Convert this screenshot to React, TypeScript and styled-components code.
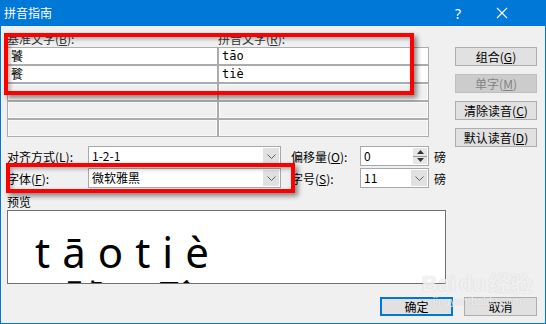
import * as React from 'react';
import styled, { createGlobalStyle } from 'styled-components';

const GlobalStyle = createGlobalStyle`
  html, body {
    margin: 0;
    padding: 0;
    overflow: hidden;
    background: #f0f0f0;
  }
  body {
    font-family: "Noto Sans CJK SC", "Noto Sans", sans-serif;
    font-size: 12px;
    color: #000;
  }
`;

const rows = [
  { base: '饕', ruby: 'tāo' },
  { base: '餮', ruby: 'tiè' },
  { base: '', ruby: '' },
  { base: '', ruby: '' },
  { base: '', ruby: '' },
];

const Chevron = () => (
  <svg width="9" height="5" viewBox="0 0 9 5">
    <polyline points="0.5,0.5 4.5,4.5 8.5,0.5" fill="none" stroke="#606060" strokeWidth="1" />
  </svg>
);

const ComboBox = ({ value }: { value: string }) => (
  <Combo>
    <ComboText>{value}</ComboText>
    <DropButton>
      <Chevron />
    </DropButton>
  </Combo>
);

const SpinBox = ({ value }: { value: string }) => (
  <Combo>
    <ComboText>{value}</ComboText>
    <Spinner>
      <svg width="7" height="4" viewBox="0 0 7 4">
        <polygon points="0,4 3.5,0 7,4" fill="#333" />
      </svg>
      <SpinDivider />
      <svg width="7" height="4" viewBox="0 0 7 4">
        <polygon points="0,0 3.5,4 7,0" fill="#333" />
      </svg>
    </Spinner>
  </Combo>
);

const App = () => {
  return (
    <>
      <GlobalStyle />
      <Window>
        <TitleBar>
          <Title>拼音指南</Title>
          <TitleButtons>
            <HelpGlyph>?</HelpGlyph>
            <CloseGlyph>
              <svg width="12" height="12" viewBox="0 0 12 12">
                <path d="M1 1 L11 11 M11 1 L1 11" stroke="#fff" strokeWidth="1.1" />
              </svg>
            </CloseGlyph>
          </TitleButtons>
        </TitleBar>

        <Body>
          <Top>
            <Main>
              <HeaderRow>
                <span>基准文字(<u>B</u>):</span>
                <span>拼音文字(<u>R</u>):</span>
              </HeaderRow>
              <Table>
                {rows.map((r, i) => (
                  <React.Fragment key={i}>
                    <Cell $filled={!!r.base}>{r.base}</Cell>
                    <Cell $filled={!!r.ruby} $latin>{r.ruby}</Cell>
                  </React.Fragment>
                ))}
              </Table>

              <Options>
                <OptionLabel>对齐方式(<u>L</u>):</OptionLabel>
                <ComboBox value="1-2-1" />
                <OptionLabel $indent>偏移量(<u>O</u>):</OptionLabel>
                <SpinBox value="0" />
                <Unit>磅</Unit>

                <OptionLabel>字体(<u>F</u>):</OptionLabel>
                <ComboBox value="微软雅黑" />
                <OptionLabel $indent>字号(<u>S</u>):</OptionLabel>
                <ComboBox value="11" />
                <Unit>磅</Unit>
              </Options>

              <PreviewLabel>预览</PreviewLabel>
              <Preview>
                <RubyGroup>
                  <RubyCol>
                    <Pinyin>tāo</Pinyin>
                    <Hanzi>饕</Hanzi>
                  </RubyCol>
                  <RubyCol>
                    <Pinyin>tiè</Pinyin>
                    <Hanzi>餮</Hanzi>
                  </RubyCol>
                </RubyGroup>
              </Preview>
            </Main>

            <Side>
              <Button>组合(<u>G</u>)</Button>
              <Button disabled>单字(<u>M</u>)</Button>
              <Button>清除读音(<u>C</u>)</Button>
              <Button>默认读音(<u>D</u>)</Button>
            </Side>
          </Top>

          <Footer>
            <Button $focused>确定</Button>
            <Button>取消</Button>
          </Footer>
        </Body>

        <Watermark>
          <WatermarkLogo>Bai<Paw>du</Paw>经验</WatermarkLogo>
          <WatermarkUrl>jingyan.baidu.com</WatermarkUrl>
        </Watermark>

        <Highlight style={{ left: 3, top: 33, width: 410, height: 62 }} />
        <Highlight style={{ left: 5, top: 163, width: 289, height: 30 }} />
      </Window>
    </>
  );
};

const Window = styled.div`
  position: relative;
  width: 546px;
  height: 324px;
  box-sizing: border-box;
  border: 1px solid #0078d7;
  border-top: none;
  background: #f0f0f0;
  display: flex;
  flex-direction: column;
  overflow: hidden;
`;

const TitleBar = styled.div`
  height: 26px;
  margin: 0 -1px;
  background: #0078d7;
  color: #fff;
  display: flex;
  align-items: center;
  justify-content: space-between;
  padding-left: 4px;
  flex-shrink: 0;
`;

const Title = styled.span`
  font-size: 12px;
  line-height: 26px;
`;

const TitleButtons = styled.div`
  display: flex;
  align-items: center;
  height: 100%;
  margin-right: 22px;
`;

const HelpGlyph = styled.span`
  width: 44px;
  text-align: center;
  font-family: "Noto Sans", sans-serif;
  font-size: 14px;
`;

const CloseGlyph = styled.span`
  width: 44px;
  display: flex;
  justify-content: center;
  align-items: center;
`;

const Body = styled.div`
  display: flex;
  flex-direction: column;
  padding: 6px 7px 0 6px;
`;

const Top = styled.div`
  display: grid;
  grid-template-columns: 439px 82px;
  column-gap: 9px;
`;

const Main = styled.div`
  display: flex;
  flex-direction: column;
`;

const HeaderRow = styled.div`
  display: grid;
  grid-template-columns: 211px 211px;
  height: 15px;
  line-height: 14px;
  color: #333;
`;

const Table = styled.div`
  display: grid;
  grid-template-columns: 211px 211px;
  grid-auto-rows: 18px;
`;

const Cell = styled.div<{ $filled?: boolean; $latin?: boolean }>`
  box-sizing: border-box;
  border: 1px solid #acacac;
  background: ${(p) => (p.$filled ? '#fff' : '#f0f0f0')};
  box-shadow: ${(p) => (p.$filled ? 'none' : 'inset 0 0 0 1px #fafafa')};
  padding-left: 3px;
  line-height: 16px;
  font-size: 12px;
  font-family: ${(p) => (p.$latin ? '"DejaVu Sans Mono", monospace' : '"Noto Sans CJK SC", sans-serif')};
`;

const Options = styled.div`
  display: grid;
  grid-template-columns: 81px 193px 79px 69px 1fr;
  grid-auto-rows: 20px;
  row-gap: 2px;
  margin-top: 9px;
  align-items: center;
`;

const OptionLabel = styled.span<{ $indent?: boolean }>`
  padding-left: ${(p) => (p.$indent ? '10px' : '0')};
  white-space: nowrap;
`;

const Unit = styled.span`
  padding-left: 5px;
`;

const Combo = styled.div`
  box-sizing: border-box;
  height: 20px;
  border: 1px solid #a8a8a8;
  background: #fff;
  display: flex;
  align-items: stretch;
`;

const ComboText = styled.span`
  flex: 1;
  padding-left: 3px;
  line-height: 18px;
  font-family: "Noto Sans CJK SC", "Noto Sans", sans-serif;
`;

const DropButton = styled.span`
  width: 16px;
  margin: 1px;
  background: #e1e1e1;
  display: flex;
  align-items: center;
  justify-content: center;
`;

const Spinner = styled.span`
  width: 14px;
  margin: 1px;
  background: #e6e6e6;
  display: flex;
  flex-direction: column;
  align-items: center;
  justify-content: space-evenly;
`;

const SpinDivider = styled.span`
  width: 100%;
  height: 1px;
  background: #9a9a9a;
`;

const PreviewLabel = styled.div`
  margin-top: 6px;
  line-height: 16px;
  height: 16px;
`;

const Preview = styled.div`
  box-sizing: border-box;
  height: 74px;
  border: 1px solid #707070;
  background: #fff;
  overflow: hidden;
  padding: 18px 0 0 27px;
`;

const RubyGroup = styled.div`
  display: flex;
`;

const RubyCol = styled.div`
  display: flex;
  flex-direction: column;
  align-items: center;
`;

const Pinyin = styled.span`
  font-family: "Noto Sans", sans-serif;
  font-size: 42px;
  line-height: 46px;
  letter-spacing: 12px;
`;

const Hanzi = styled.span`
  font-family: "Noto Sans CJK SC", sans-serif;
  font-size: 42px;
  line-height: 42px;
  margin-top: 2px;
`;

const Side = styled.div`
  display: flex;
  flex-direction: column;
  gap: 8px;
  margin-top: 15px;
`;

const Button = styled.button<{ $focused?: boolean }>`
  box-sizing: border-box;
  width: 73px;
  height: 19px;
  padding: 0;
  background: #e1e1e1;
  border: ${(p) => (p.$focused ? '2px solid #0078d7' : '1px solid #adadad')};
  font-family: "Noto Sans CJK SC", sans-serif;
  font-size: 12px;
  line-height: 15px;
  color: #000;
  ${Side} & {
    width: 82px;
  }
  &:disabled {
    background: #cccccc;
    border-color: #bfbfbf;
    color: #838383;
  }
`;

const Footer = styled.div`
  display: flex;
  justify-content: flex-end;
  gap: 11px;
  margin-top: 13px;
  padding-right: 1px;
`;

const Watermark = styled.div`
  position: absolute;
  right: 12px;
  bottom: 16px;
  display: flex;
  flex-direction: column;
  align-items: center;
  color: rgba(255, 255, 255, 0.75);
  text-shadow: 0 0 1px rgba(150, 150, 150, 0.5);
  pointer-events: none;
`;

const WatermarkLogo = styled.span`
  font-family: "Liberation Sans", sans-serif;
  font-weight: bold;
  font-size: 22px;
  line-height: 22px;
`;

const Paw = styled.span`
  margin: 0 3px;
`;

const WatermarkUrl = styled.span`
  font-family: "Liberation Sans", sans-serif;
  font-size: 11px;
  line-height: 12px;
`;

const Highlight = styled.div`
  position: absolute;
  box-sizing: border-box;
  border: 4px solid #ff0000;
  box-shadow: 3px 3px 5px rgba(0, 0, 0, 0.45), inset 2px 2px 4px rgba(0, 0, 0, 0.3);
  pointer-events: none;
`;

export default App;
